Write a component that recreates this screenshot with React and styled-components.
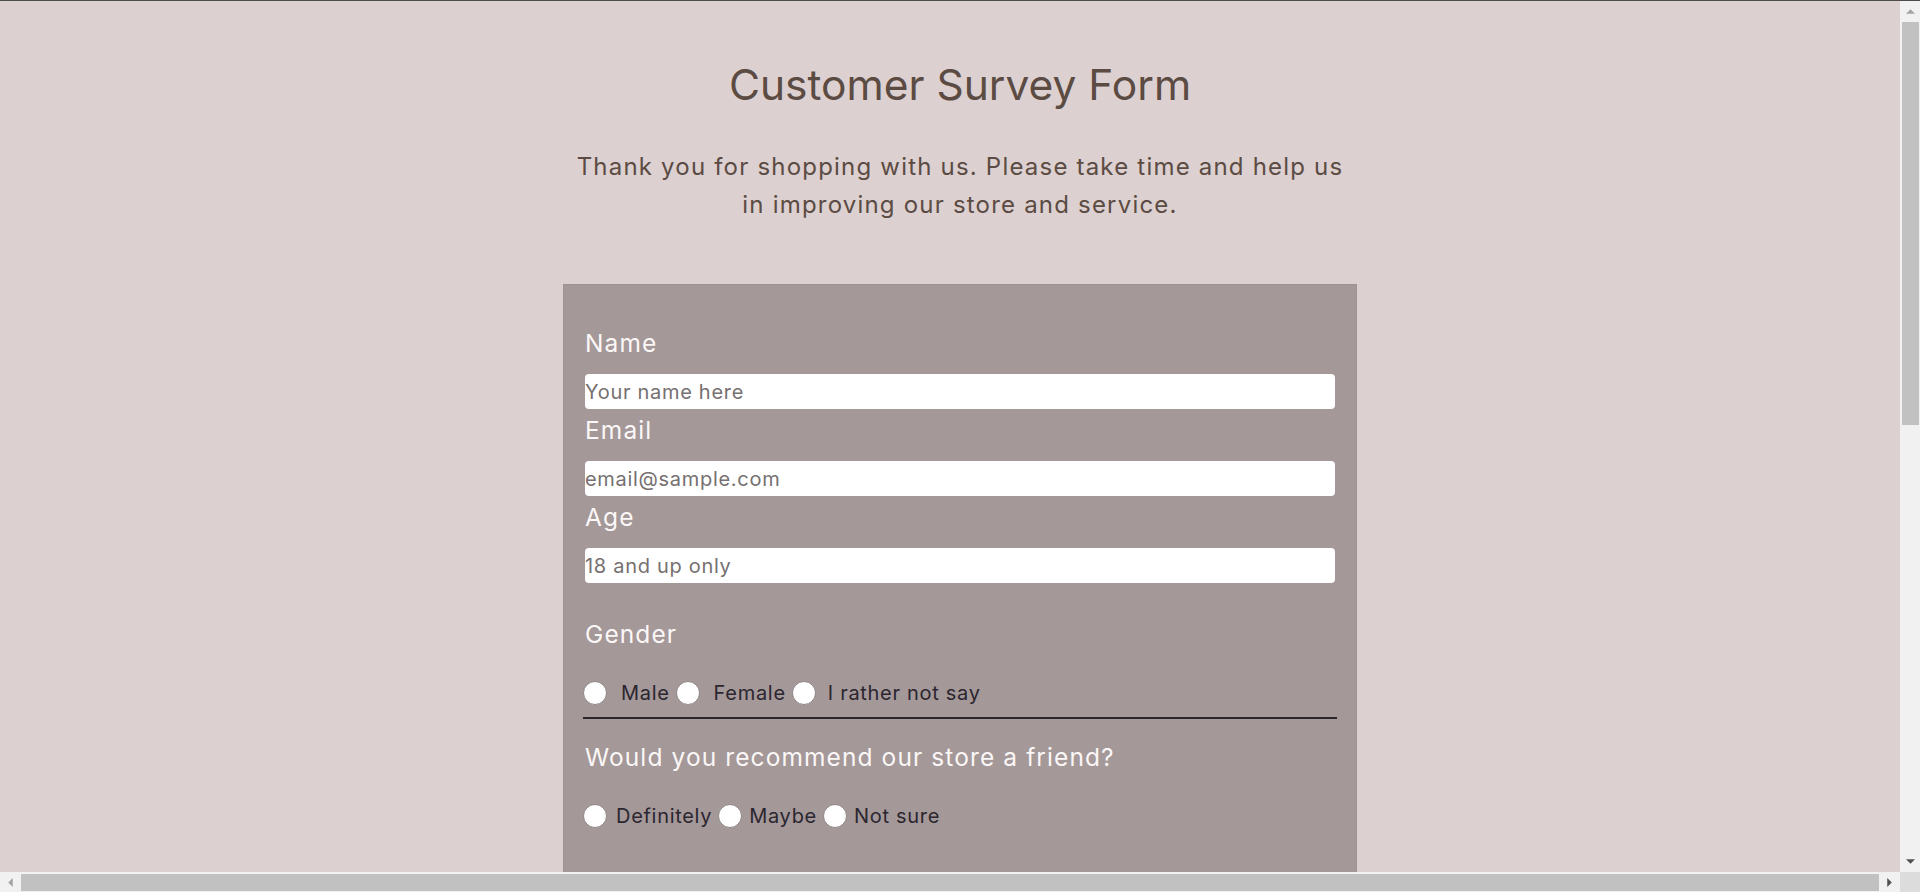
import React from 'react';
import styled, { createGlobalStyle } from 'styled-components';

const GlobalStyle = createGlobalStyle`
  html, body { margin: 0; padding: 0; }
  html { scrollbar-width: none; }
  body {
    background: #dcd0d0;
    font-family: Inter, "Noto Sans", sans-serif;
    border-top: 1px solid #4d4d4d;
  }
  *, *::before, *::after { box-sizing: border-box; }
`;

/* ---------- page ---------- */

const Page = styled.main`
  width: 100vw;
  display: flex;
  flex-direction: column;
  align-items: center;
  padding: 58px 0 64px;
`;

const Title = styled.h1`
  margin: 0;
  font-size: 42.5px;
  line-height: 52px;
  font-weight: 400;
  color: #5b4b43;
  text-align: center;
`;

const Intro = styled.p`
  margin: 37px 0 0;
  font-size: 24px;
  line-height: 38px;
  letter-spacing: 1.2px;
  color: #5b4b43;
  text-align: center;
`;

const Form = styled.form`
  margin-top: 60px;
  width: 794px;
  background: #a49898;
  border: 1px solid #9d9191;
  padding: 43px 21px 64px;
  display: flex;
  flex-direction: column;
`;

const Label = styled.label`
  display: block;
  font-size: 24.5px;
  line-height: 30px;
  letter-spacing: 1.1px;
  color: #fbf7f7;
`;

const fieldBase = `
  display: block;
  width: 100%;
  padding: 0;
  border: none;
  border-radius: 4px;
  background: #fff;
  font-family: inherit;
  font-size: 20px;
  letter-spacing: 0.7px;
  outline: none;
`;

const TextInput = styled.input`
  ${fieldBase}
  height: 35px;
  margin: 16px 0 6px;
  color: #333;
  &::placeholder { color: #767070; }
`;

const Select = styled.select`
  ${fieldBase}
  height: 35px;
  margin: 16px 0 6px;
  color: #555;
`;

const TextArea = styled.textarea`
  ${fieldBase}
  height: 220px;
  margin: 16px 0 6px;
  resize: none;
  &::placeholder { color: #767070; }
`;

const Section = styled.div`
  margin: ${p => p.$top}px -2px 0;
  padding: 0 0 ${p => (p.$divider ? 12 : 0)}px;
  border-bottom: ${p => (p.$divider ? '2px solid #2a2528' : 'none')};
  & > ${Label} { padding-left: 2px; }
`;

const OptionRow = styled.div`
  display: flex;
  flex-direction: ${p => (p.$column ? 'column' : 'row')};
  align-items: ${p => (p.$column ? 'flex-start' : 'center')};
  gap: ${p => (p.$column ? 10 : 0)}px;
  margin-top: 32px;
`;

const Option = styled.label`
  display: flex;
  align-items: center;
  gap: ${p => p.$gap}px;
  margin-right: 6px;
  font-size: 20px;
  line-height: 24px;
  letter-spacing: 0.7px;
  color: #2b2630;
`;

const Radio = styled.input.attrs({ type: 'radio' })`
  appearance: none;
  width: 24px;
  height: 24px;
  margin: 0;
  border-radius: 50%;
  border: 1px solid #8c8585;
  background: #fff;
  flex: none;
`;

const Check = styled.input.attrs({ type: 'checkbox' })`
  appearance: none;
  width: 22px;
  height: 22px;
  margin: 0;
  border-radius: 3px;
  border: 1px solid #8c8585;
  background: #fff;
  flex: none;
`;

const Submit = styled.button`
  margin-top: 44px;
  align-self: stretch;
  height: 48px;
  border: none;
  border-radius: 4px;
  background: #5b4b43;
  color: #fbf7f7;
  font-family: inherit;
  font-size: 22px;
  letter-spacing: 1px;
`;

/* ---------- window scrollbars (drawn over the page) ---------- */

const VBar = styled.div`
  position: fixed;
  top: 1px;
  right: 0;
  bottom: 20px;
  width: 20px;
  background: #f1f1f1;
  display: flex;
  flex-direction: column;
  align-items: center;
  z-index: 10;
`;

const HBar = styled.div`
  position: fixed;
  left: 0;
  right: 20px;
  bottom: 0;
  height: 20px;
  background: #f1f1f1;
  display: flex;
  align-items: center;
  z-index: 10;
`;

const Corner = styled.div`
  position: fixed;
  right: 0;
  bottom: 0;
  width: 20px;
  height: 20px;
  background: #dcdcdc;
  z-index: 10;
`;

const ArrowBox = styled.div`
  flex: none;
  width: ${p => (p.$h ? 21 : 20)}px;
  height: ${p => (p.$h ? 20 : 21)}px;
  display: flex;
  align-items: center;
  justify-content: center;
`;

const Thumb = styled.div`
  flex: none;
  background: #c1c1c1;
  width: ${p => (p.$h ? 'auto' : '17px')};
  height: ${p => (p.$h ? '17px' : `${p.$len}px`)};
  ${p => (p.$h ? `flex: 1; margin: 2px 0 1px;` : `margin-left: 1px;`)}
`;

const Spacer = styled.div`
  flex: 1;
`;

const Arrow = ({ dir, color }) => {
  const pts = {
    up: '0,4.5 4.5,0 9,4.5',
    down: '0,0 4.5,4.5 9,0',
    left: '4.5,0 0,4.5 4.5,9',
    right: '0,0 4.5,4.5 0,9',
  }[dir];
  const vert = dir === 'up' || dir === 'down';
  return (
    <svg width={vert ? 9 : 5} height={vert ? 5 : 9} viewBox={vert ? '0 0 9 4.5' : '0 0 4.5 9'}>
      <polygon points={pts} fill={color} />
    </svg>
  );
};

export default function App() {
  return (
    <>
      <GlobalStyle />
      <Page>
        <Title id="title">Customer Survey Form</Title>
        <Intro id="description">
          Thank you for shopping with us. Please take time and help us
          <br />
          in improving our store and service.
        </Intro>
        <Form id="survey-form" onSubmit={e => e.preventDefault()}>
          <Label htmlFor="name">Name</Label>
          <TextInput id="name" type="text" placeholder="Your name here" />
          <Label htmlFor="email">Email</Label>
          <TextInput id="email" type="email" placeholder="email@sample.com" />
          <Label htmlFor="number">Age</Label>
          <TextInput id="number" type="number" placeholder="18 and up only" />

          <Section $top={30} $divider>
            <Label as="div">Gender</Label>
            <OptionRow>
              <Option $gap={14}><Radio name="gender" />Male</Option>
              <Option $gap={14}><Radio name="gender" />Female</Option>
              <Option $gap={12}><Radio name="gender" />I rather not say</Option>
            </OptionRow>
          </Section>

          <Section $top={23}>
            <Label as="div">Would you recommend our store a friend?</Label>
            <OptionRow>
              <Option $gap={9}><Radio name="recommend" />Definitely</Option>
              <Option $gap={7}><Radio name="recommend" />Maybe</Option>
              <Option $gap={7}><Radio name="recommend" />Not sure</Option>
            </OptionRow>
          </Section>

          <Section $top={52}>
            <Label as="div">What would you like us to improve?</Label>
            <OptionRow $column>
              <Option $gap={10}><Check />Customer service</Option>
              <Option $gap={10}><Check />Product quality</Option>
              <Option $gap={10}><Check />Prices</Option>
              <Option $gap={10}><Check />Store layout</Option>
            </OptionRow>
          </Section>

          <Section $top={40}>
            <Label htmlFor="dropdown">How did you hear about us?</Label>
            <Select id="dropdown" defaultValue="">
              <option value="" disabled>Select an option</option>
              <option>Friends and family</option>
              <option>Social media</option>
              <option>Advertisement</option>
            </Select>
          </Section>

          <Section $top={30}>
            <Label htmlFor="comments">Any comments or suggestions?</Label>
            <TextArea id="comments" placeholder="Enter your comments here..." />
          </Section>

          <Submit id="submit" type="submit">Submit</Submit>
        </Form>
      </Page>

      <VBar aria-hidden="true">
        <ArrowBox><Arrow dir="up" color="#a3a3a3" /></ArrowBox>
        <Thumb $len={403} />
        <Spacer />
        <ArrowBox><Arrow dir="down" color="#505050" /></ArrowBox>
      </VBar>
      <HBar aria-hidden="true">
        <ArrowBox $h><Arrow dir="left" color="#a3a3a3" /></ArrowBox>
        <Thumb $h />
        <ArrowBox $h><Arrow dir="right" color="#505050" /></ArrowBox>
      </HBar>
      <Corner aria-hidden="true" />
    </>
  );
}
